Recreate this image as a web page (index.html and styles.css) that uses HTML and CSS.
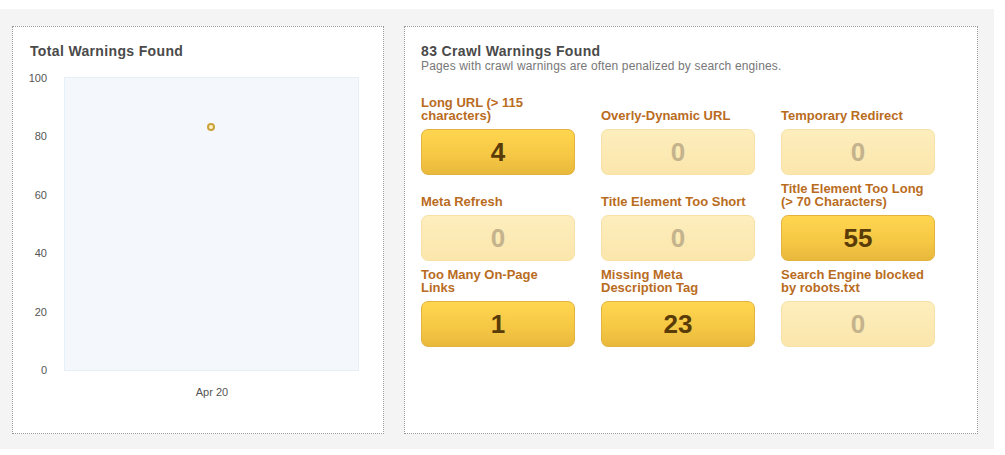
FILE: index.html
```html
<!DOCTYPE html>
<html lang="en">

<head>
    <meta charset="UTF-8">
    <title>Crawl Warnings</title>
    <link rel="stylesheet" href="styles.css">
</head>

<body>
    <div class="page">
        <div class="card chart-card">
            <h2>Total Warnings Found</h2>
            <svg class="chart" width="370" height="350" viewBox="0 0 370 350">
                <rect x="51.5" y="18.5" width="294" height="293" fill="#f4f8fd" stroke="#e6eef8" />
                <g class="axis">
                    <text x="34" y="23">100</text>
                    <text x="34" y="81">80</text>
                    <text x="34" y="140">60</text>
                    <text x="34" y="198">40</text>
                    <text x="34" y="257">20</text>
                    <text x="34" y="315">0</text>
                </g>
                <circle cx="198" cy="68" r="3" fill="#fff3c4" stroke="#c9a23c" stroke-width="2" />
                <text class="date" x="199" y="337">Apr 20</text>
            </svg>
        </div>

        <div class="card warnings">
            <h2>83 Crawl Warnings Found</h2>
            <p class="sub">Pages with crawl warnings are often penalized by search engines.</p>

            <div class="grid">
                <div class="item">
                    <div class="label">Long URL (&gt; 115 characters)</div>
                    <div class="count on">4</div>
                </div>
                <div class="item">
                    <div class="label">Overly-Dynamic URL</div>
                    <div class="count">0</div>
                </div>
                <div class="item">
                    <div class="label">Temporary Redirect</div>
                    <div class="count">0</div>
                </div>
                <div class="item">
                    <div class="label">Meta Refresh</div>
                    <div class="count">0</div>
                </div>
                <div class="item">
                    <div class="label">Title Element Too Short</div>
                    <div class="count">0</div>
                </div>
                <div class="item">
                    <div class="label">Title Element Too Long (&gt; 70 Characters)</div>
                    <div class="count on">55</div>
                </div>
                <div class="item">
                    <div class="label">Too Many On-Page Links</div>
                    <div class="count on">1</div>
                </div>
                <div class="item">
                    <div class="label">Missing Meta Description Tag</div>
                    <div class="count on">23</div>
                </div>
                <div class="item">
                    <div class="label">Search Engine blocked by robots.txt</div>
                    <div class="count">0</div>
                </div>
            </div>
        </div>
    </div>
</body>

</html>
```

FILE: styles.css
```css
body {
    margin: 0;
    background: #fff;
    font-family: "Liberation Sans", Arial, sans-serif;
}

.page {
    margin-top: 9px;
    width: 994px;
    height: 440px;
    box-sizing: border-box;
    padding: 17px 0 0 12px;
    background: #f4f4f4;
    display: flex;
    gap: 20px;
    align-items: flex-start;
}

.card {
    background: #fff;
    border: 1px dotted #9a9a9a;
    height: 408px;
    box-sizing: border-box;
}

.card h2 {
    margin: 16px 0 0 0;
    font-size: 14px;
    line-height: 16px;
    letter-spacing: 0.35px;
    color: #4a4a4a;
}

.chart-card {
    width: 372px;
}

.chart-card h2 {
    margin-left: 17px;
}

.chart {
    display: block;
}

.axis text {
    font-size: 11px;
    fill: #555;
    text-anchor: end;
}

.date {
    font-size: 11px;
    fill: #555;
    text-anchor: middle;
}

.warnings {
    width: 574px;
    padding-left: 16px;
}

.sub {
    margin: 0;
    font-size: 12px;
    line-height: 14px;
    letter-spacing: 0.15px;
    color: #777;
}

.grid {
    margin-top: 23px;
    display: grid;
    grid-template-columns: repeat(3, 154px);
    column-gap: 26px;
    row-gap: 7px;
}

.item {
    display: flex;
    flex-direction: column;
}

.label {
    height: 26px;
    display: flex;
    align-items: flex-end;
    font-size: 13px;
    line-height: 13px;
    font-weight: bold;
    color: #b96c1e;
    margin-bottom: 7px;
}

.count {
    height: 46px;
    box-sizing: border-box;
    border-radius: 7px;
    border: 1px solid #f7e1a6;
    background: linear-gradient(#fdeebd, #fbe6ac);
    display: flex;
    align-items: center;
    justify-content: center;
    font-size: 26px;
    font-weight: bold;
    color: #c4b38c;
}

.count.on {
    border-color: #e3b33f;
    background: linear-gradient(#ffd650, #f5c744 60%, #e8b83c);
    color: #5a3c08;
}
```
